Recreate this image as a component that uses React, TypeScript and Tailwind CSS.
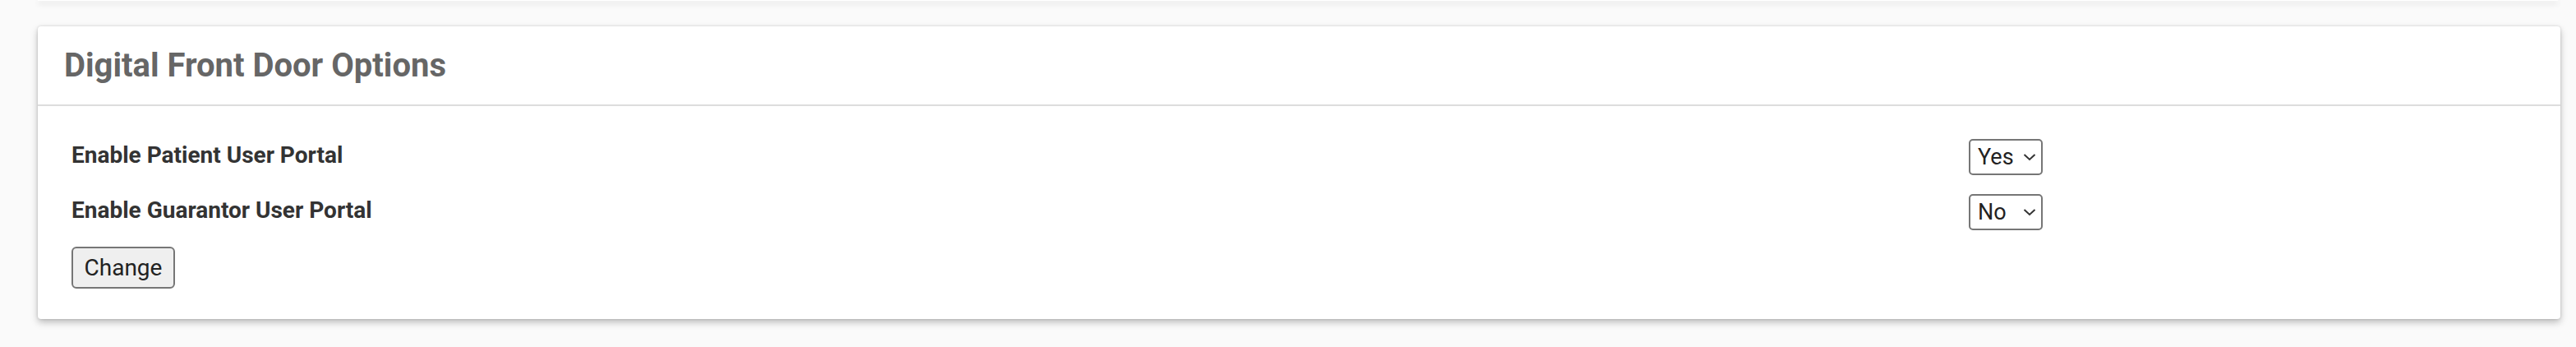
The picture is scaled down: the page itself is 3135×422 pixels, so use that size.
import React from 'react';

const rows = [
  { label: 'Enable Patient User Portal', value: 'Yes' },
  { label: 'Enable Guarantor User Portal', value: 'No' },
];

function YesNoSelect({ value }: { value: string }) {
  return (
    <div className="relative w-[90px] h-[44px]">
      <select
        defaultValue={value}
        className="appearance-none w-full h-full pl-[9px] pr-[24px] bg-white border-2 border-[#767676] rounded-[5px] text-[27px] leading-none text-[#222] outline-none"
      >
        <option>Yes</option>
        <option>No</option>
      </select>
      <svg
        className="pointer-events-none absolute right-[8px] top-[17px]"
        width="16"
        height="10"
        viewBox="0 0 16 10"
        fill="none"
      >
        <path d="M1.5 2 L8 8 L14.5 2" stroke="#333" strokeWidth="2" />
      </svg>
    </div>
  );
}

export default function App() {
  return (
    <main className="min-h-screen bg-[#fafafa] font-['Roboto','Liberation_Sans',sans-serif]">
      {/* bottom of the previous card */}
      <div className="ml-[46px] mr-[22px] h-[1px] bg-white shadow-[0_3px_6px_rgba(0,0,0,0.28)]" />

      {/* Card */}
      <section className="mt-[31px] ml-[46px] mr-[19px] bg-white rounded-[4px] shadow-[0_4px_8px_rgba(0,0,0,0.25),0_0_3px_rgba(0,0,0,0.15)]">
        <header className="h-[97px] flex items-center pl-[32px] border-b-2 border-[#dddddd]">
          <h2 className="text-[40px] font-bold text-[#666666] leading-none">
            Digital Front Door Options
          </h2>
        </header>

        <div className="pt-[40px] pb-[37px] pl-[41px]">
          <div className="flex flex-col gap-[23px]">
            {rows.map((r) => (
              <div key={r.label} className="grid grid-cols-[2309px_auto] items-start">
                <label className="pt-[3px] text-[28px] font-bold text-[#333333] leading-[33px]">
                  {r.label}
                </label>
                <YesNoSelect value={r.value} />
              </div>
            ))}
          </div>
          <button className="mt-[20px] w-[126px] h-[51px] bg-[#efefef] border-2 border-[#767676] rounded-[6px] text-[28px] text-[#222] leading-none">
            Change
          </button>
        </div>
      </section>
    </main>
  );
}
